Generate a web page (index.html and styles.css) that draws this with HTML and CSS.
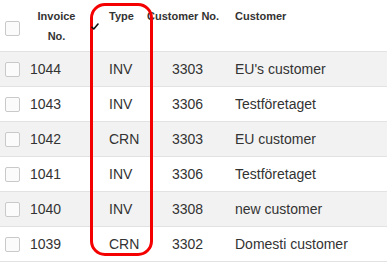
FILE: index.html
```html
<!DOCTYPE html>
<html>
<head>
<meta charset="utf-8">
<link rel="stylesheet" href="styles.css">
</head>
<body>
<div class="table">
  <div class="head">
    <div class="hcell hcheck"><span class="box"></span></div>
    <div class="hcell hinv">Invoice<br>No.</div>
    <div class="hcell hsort"><svg class="tick" width="8" height="7" viewBox="0 0 8 7"><polyline points="1,4.2 2.8,6 7,1" fill="none" stroke="#111" stroke-width="1.6" stroke-linecap="round" stroke-linejoin="round"/></svg></div>
    <div class="hcell htype">Type</div>
    <div class="hcell hcno">Customer No.</div>
    <div class="hcell hcust">Customer</div>
  </div>
  <div class="row alt"><div class="cell"><span class="box"></span></div><div class="cell">1044</div><div class="cell">INV</div><div class="cell">3303</div><div class="cell">EU's customer</div></div>
  <div class="row"><div class="cell"><span class="box"></span></div><div class="cell">1043</div><div class="cell">INV</div><div class="cell">3306</div><div class="cell">Testföretaget</div></div>
  <div class="row alt"><div class="cell"><span class="box"></span></div><div class="cell">1042</div><div class="cell">CRN</div><div class="cell">3303</div><div class="cell">EU customer</div></div>
  <div class="row"><div class="cell"><span class="box"></span></div><div class="cell">1041</div><div class="cell">INV</div><div class="cell">3306</div><div class="cell">Testföretaget</div></div>
  <div class="row alt"><div class="cell"><span class="box"></span></div><div class="cell">1040</div><div class="cell">INV</div><div class="cell">3308</div><div class="cell">new customer</div></div>
  <div class="row"><div class="cell"><span class="box"></span></div><div class="cell">1039</div><div class="cell">CRN</div><div class="cell">3302</div><div class="cell">Domesti customer</div></div>
  <div class="highlight"></div>
</div>
</body>
</html>
```
FILE: styles.css
```css
html, body {
  margin: 0;
  padding: 0;
  background: #fff;
}
body {
  font-family: "Liberation Sans", Arial, sans-serif;
  color: #333;
}
.table {
  position: relative;
  width: 387px;
}
.head {
  display: grid;
  grid-template-columns: 30px 53px 26px 38px 88px 1fr;
  height: 51px;
  border-bottom: 1px solid #e2e2e2;
}
.hcell {
  font-size: 11px;
  font-weight: bold;
  line-height: 20px;
  padding-top: 6px;
  color: #333;
  white-space: nowrap;
}
.hcheck {
  padding-top: 21px;
  padding-left: 5px;
}
.hinv {
  text-align: center;
}
.hsort {
  padding-top: 23px;
  padding-left: 8px;
}
.tick {
  display: block;
  position: relative;
  z-index: 2;
}
.row {
  display: grid;
  grid-template-columns: 30px 79px 63px 63px 1fr;
  height: 34px;
  border-bottom: 1px solid #e2e2e2;
  align-items: center;
  font-size: 14px;
}
.row.alt {
  background: #f2f2f2;
}
.cell {
  white-space: nowrap;
}
.cell:first-child {
  padding-left: 5px;
  height: 15px;
}
.box {
  display: block;
  width: 13px;
  height: 13px;
  border: 1px solid #c9c9c9;
  border-radius: 2px;
  background: #fbfbfb;
}
.highlight {
  position: absolute;
  z-index: 1;
  left: 90px;
  top: 3px;
  width: 57px;
  height: 247px;
  border: 3px solid #f40000;
  border-radius: 15px;
  pointer-events: none;
}
```
